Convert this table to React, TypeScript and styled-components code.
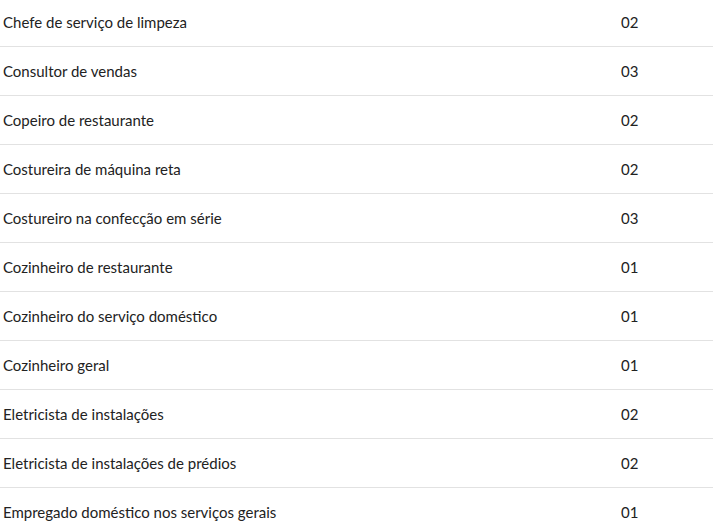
import React from "react";
import styled, { createGlobalStyle } from "styled-components";

const Global = createGlobalStyle`
  html, body { margin: 0; padding: 0; background: #fff; }
  body { font-family: Lato, "Open Sans", sans-serif; color: #222; overflow: hidden; }
`;

const Table = styled.div`
  display: flex;
  flex-direction: column;
  margin-top: -2px;
  width: 713px;
`;

const Row = styled.div`
  display: grid;
  grid-template-columns: 621px 1fr;
  height: 48px;
  align-items: center;
  border-bottom: 1px solid #e2e2e2;
  font-size: 15px;
`;

const Name = styled.span`
  padding-left: 3px;
`;

const Qty = styled.span``;

const rows: [string, string][] = [
  ["Chefe de serviço de limpeza", "02"],
  ["Consultor de vendas", "03"],
  ["Copeiro de restaurante", "02"],
  ["Costureira de máquina reta", "02"],
  ["Costureiro na confecção em série", "03"],
  ["Cozinheiro de restaurante", "01"],
  ["Cozinheiro do serviço doméstico", "01"],
  ["Cozinheiro geral", "01"],
  ["Eletricista de instalações", "02"],
  ["Eletricista de instalações de prédios", "02"],
  ["Empregado doméstico nos serviços gerais", "01"],
];

export default function App() {
  return (
    <>
      <Global />
      <Table>
        {rows.map(([n, q]) => (
          <Row key={n}>
            <Name>{n}</Name>
            <Qty>{q}</Qty>
          </Row>
        ))}
      </Table>
    </>
  );
}
